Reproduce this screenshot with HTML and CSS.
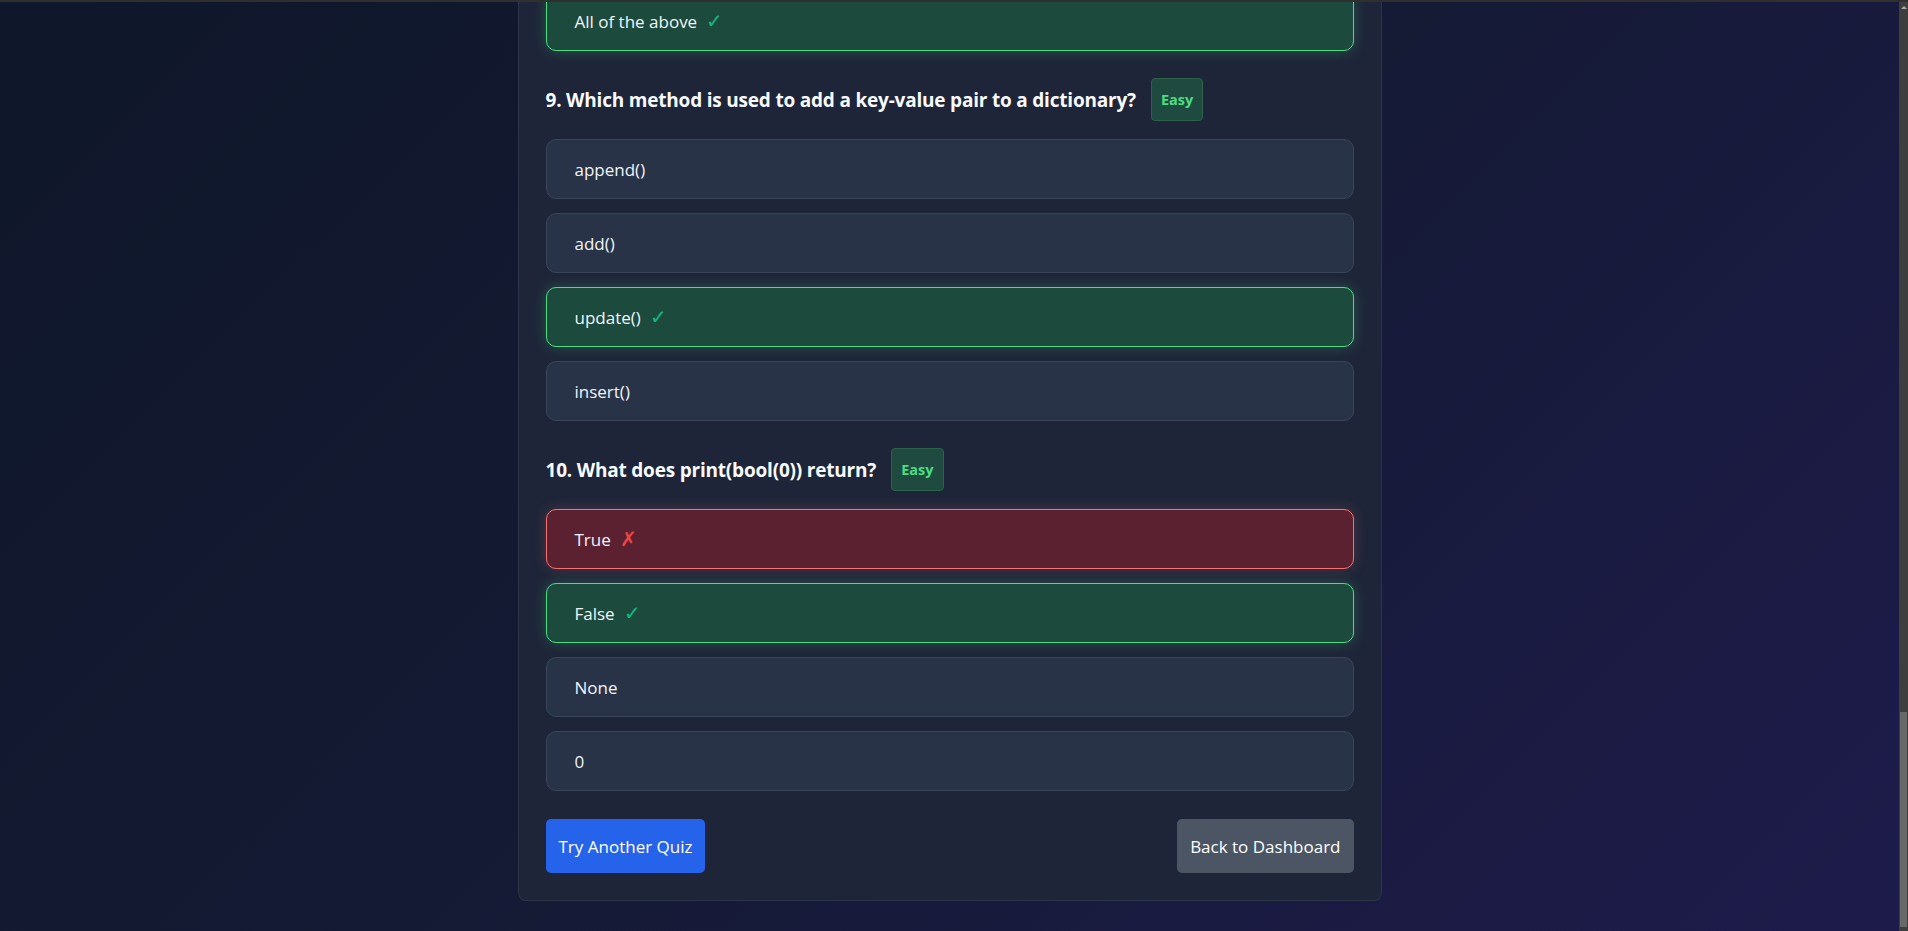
FILE: index.html
```html
<!DOCTYPE html>
<html lang="en">
<head>
<meta charset="utf-8">
<title>Quiz Results</title>
<link rel="stylesheet" href="styles.css">
</head>
<body>
<div class="topline"></div>
<div class="frame">
  <main class="viewport">
    <section class="card">
      <div class="options first">
        <div class="option correct">All of the above <span class="mark ok">✓</span></div>
      </div>

      <div class="question">
        <div class="q-head">
          <h3>9. Which method is used to add a key-value pair to a dictionary?</h3>
          <span class="badge">Easy</span>
        </div>
        <div class="options">
          <div class="option">append()</div>
          <div class="option">add()</div>
          <div class="option correct">update() <span class="mark ok">✓</span></div>
          <div class="option">insert()</div>
        </div>
      </div>

      <div class="question">
        <div class="q-head">
          <h3>10. What does print(bool(0)) return?</h3>
          <span class="badge">Easy</span>
        </div>
        <div class="options">
          <div class="option wrong">True <span class="mark bad">✗</span></div>
          <div class="option correct">False <span class="mark ok">✓</span></div>
          <div class="option">None</div>
          <div class="option">0</div>
        </div>
      </div>

      <div class="actions">
        <button class="btn btn-primary">Try Another Quiz</button>
        <button class="btn btn-secondary">Back to Dashboard</button>
      </div>
    </section>
  </main>
  <div class="scrollbar">
    <div class="scroll-arrow"></div>
    <div class="scroll-space"></div>
    <div class="scroll-thumb"></div>
  </div>
</div>
</body>
</html>
```
FILE: styles.css
```css
* { box-sizing: border-box; }

html, body {
  margin: 0;
  height: 931px;
  overflow: hidden;
}

body {
  display: flex;
  flex-direction: column;
  font-family: "Open Sans", "Noto Sans", "Liberation Sans", sans-serif;
  color: #ffffff;
  background: #111827;
}

.topline {
  height: 2px;
  background: #2f2f30;
  flex: none;
}

.frame {
  flex: 1;
  display: flex;
  min-height: 0;
}

.viewport {
  flex: 1;
  min-width: 0;
  overflow: hidden;
  display: flex;
  justify-content: center;
  align-items: flex-end;
  background: linear-gradient(135deg, #0f172a 0%, #141a33 45%, #1e1b4b 100%);
  padding-bottom: 30px;
}

.card {
  width: 864px;
  flex: none;
  background: #1e2539;
  border: 1px solid #2c3448;
  border-top: none;
  border-radius: 0 0 8px 8px;
  padding: 0 27px 27px;
  display: flex;
  flex-direction: column;
}

.question {
  margin-top: 27px;
}

.q-head {
  display: flex;
  align-items: center;
  gap: 15px;
  margin-bottom: 18px;
}

.q-head h3 {
  margin: 0;
  font-size: 19px;
  font-weight: 700;
  letter-spacing: -0.2px;
  color: #f8fafc;
}

.badge {
  display: inline-flex;
  align-items: center;
  justify-content: center;
  height: 43px;
  padding: 0 9px;
  border-radius: 4px;
  background: #1f4a40;
  border: 1px solid #2b6249;
  color: #4ade80;
  font-size: 14.5px;
  font-weight: 700;
}

.options {
  display: flex;
  flex-direction: column;
  gap: 14px;
}

.option {
  height: 60px;
  display: flex;
  align-items: center;
  padding: 0 28px;
  border-radius: 10px;
  background: #283347;
  border: 1px solid #3a4559;
  font-size: 17px;
  color: #f1f5f9;
}

.option.correct {
  background: #1c4a3d;
  border-color: #4ade80;
  box-shadow: 0 0 14px rgba(74, 222, 128, 0.25);
}

.option.wrong {
  background: #5c2130;
  border-color: #f87171;
  box-shadow: 0 0 14px rgba(248, 113, 113, 0.22);
}

.mark {
  margin-left: 9px;
  font-size: 20px;
  line-height: 1;
  font-family: "DejaVu Sans", sans-serif;
  font-weight: 200;
}

.mark.ok { color: #10b981; }
.mark.bad { color: #ef4444; }

.options.first .option {
  margin-top: -7px;
}

.actions {
  margin-top: 28px;
  display: flex;
  justify-content: space-between;
}

.btn {
  height: 54px;
  padding: 0 13px;
  border: none;
  border-radius: 5px;
  font-family: inherit;
  font-size: 17px;
  color: #ffffff;
  cursor: pointer;
}

.btn-primary { background: #2563eb; }
.btn-secondary { background: #4b5563; }

.scrollbar {
  width: 9px;
  flex: none;
  background: #3e3e3e;
  display: flex;
  flex-direction: column;
  align-items: center;
}

.scroll-arrow {
  width: 0;
  height: 0;
  margin-top: 4px;
  border-left: 3px solid transparent;
  border-right: 3px solid transparent;
  border-bottom: 3px solid #a8a8a8;
}

.scroll-space { flex: 1; }

.scroll-thumb {
  width: 7px;
  height: 215px;
  margin-bottom: 4px;
  background: #686868;
}
```
